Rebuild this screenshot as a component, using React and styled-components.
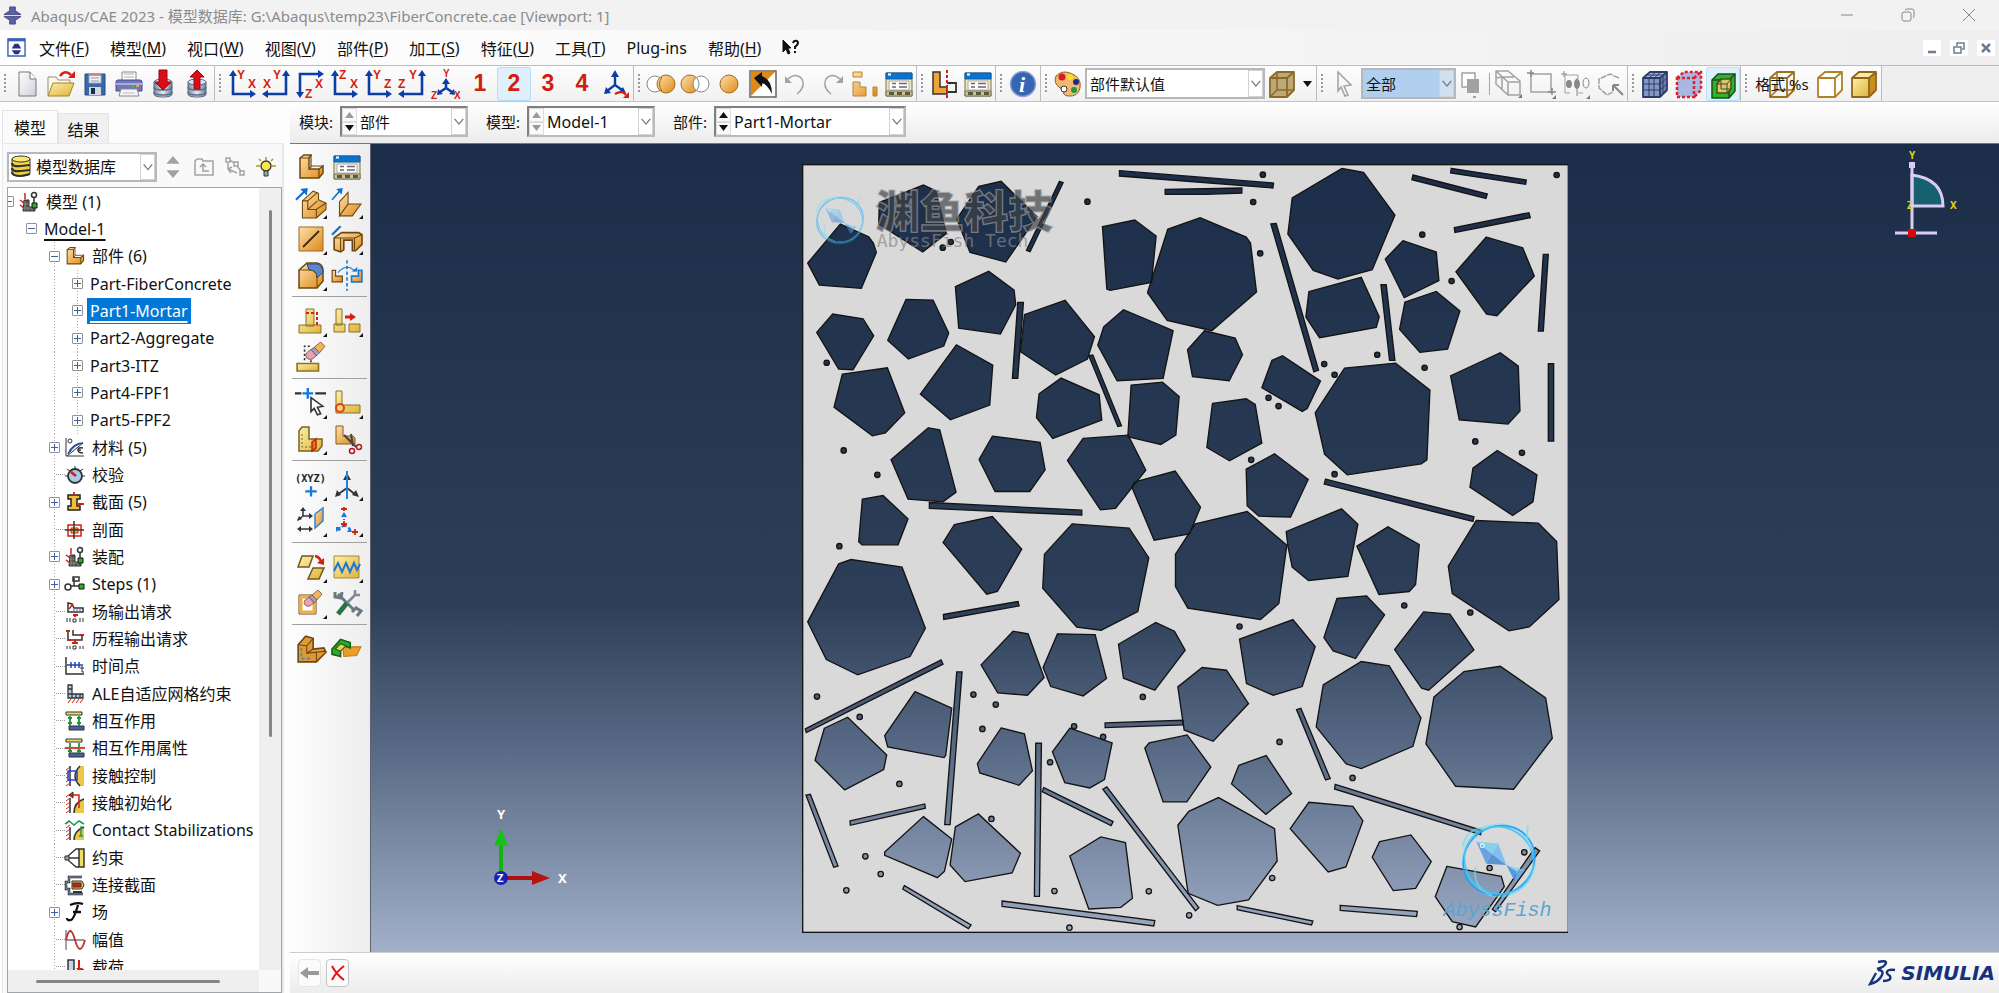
import React, { useState } from "react"
import styled, { createGlobalStyle, css } from "styled-components"

const GlobalStyle = createGlobalStyle`
  * {
    box-sizing: border-box;
  }

  body {
    margin: 0;
    font-family: "Noto Sans", "Noto Sans CJK SC", sans-serif;
    font-size: 16px;
    color: #111;
    background: #f0f0f0;
  }

  button,
  select {
    font: inherit;
    color: inherit;
    margin: 0;
    padding: 0;
    border: 0;
    background: none;
  }
`

const Window = styled.div`
  display: flex;
  flex-direction: column;
  height: 100vh;
  overflow: hidden;
`

const TitleBar = styled.header`
  display: flex;
  align-items: center;
  flex: 0 0 30px;
  padding: 0 0 0 3px;
  background: #f2f2f2;
  color: #8b8b8b;
  font-size: 15px;
  white-space: nowrap;

  h1 {
    flex: 1;
    margin: 0 0 0 9px;
    font-size: 15px;
    font-weight: 400;
  }
`

const WindowButton = styled.button`
  display: flex;
  align-items: center;
  justify-content: center;
  width: 61px;
  height: 30px;
`

const MenuBar = styled.nav`
  display: flex;
  align-items: center;
  gap: 21px;
  flex: 0 0 35px;
  padding: 0 4px 0 7px;
  white-space: nowrap;
  background: linear-gradient(90deg, #fff, #f6f6f6 55%, #eee);

  > svg {
    margin-right: -8px;
  }

  > button {
    display: flex;
    align-items: center;
  }

  u {
    text-underline-offset: 2px;
  }
`

const ChildButtons = styled.div`
  display: flex;
  gap: 9px;
  margin-left: auto;

  button {
    display: flex;
    align-items: center;
    justify-content: center;
    width: 18px;
    height: 16px;
    background: #fff;
  }
`

const Toolbar = styled.div`
  display: flex;
  flex: 0 0 37px;
  border-top: 1px solid #bcbcc0;
  border-bottom: 1px solid #c4c4c8;
  background: #efefef;
`

const ToolGroup = styled.div`
  display: flex;
  align-items: center;
  flex: none;
  border-right: 1px solid #bcbcc0;
  background: linear-gradient(#fdfdfd, #f1f1f1);

  &::before {
    content: "";
    width: 2px;
    height: 20px;
    margin: 0 4px;
    background: repeating-linear-gradient(#9a9a9a 0 2px, transparent 2px 4px);
  }
`

const ToolButton = styled.button`
  display: flex;
  align-items: center;
  justify-content: center;
  width: ${p => p.$width || 34}px;
  height: 34px;
  border-radius: 3px;

  ${p =>
    p.$active &&
    css`
      background: #dff0fd;
      box-shadow: inset 0 0 0 1px #b9defa;
    `}

  ${p =>
    p.$num &&
    css`
      color: #d01f10;
      font-family: "Liberation Sans", Arial, sans-serif;
      font-size: 23px;
      font-weight: 700;
    `}
`

const Rule = styled.span`
  width: 1px;
  height: 22px;
  margin: 0 1px;
  background: #a5a5a5;
`

const FormatButton = styled.button`
  display: grid;
  align-items: center;
  justify-items: center;
  width: 62px;
  height: 34px;
  font-size: 15px;
  white-space: nowrap;

  > * {
    grid-area: 1 / 1;
  }
`

const SelectBox = styled.span`
  display: flex;
  align-items: stretch;
  position: relative;
  width: ${p => p.$width}px;
  height: ${p => p.$height || 31}px;
  border: 2px solid #b5b8be;
  border-color: ${p => (p.$sunken ? "#808080 #bbb #bbb #808080" : "#b5b8be")};
  background: ${p => (p.$blue ? "#b0cfef" : "#fff")};

  select {
    flex: 1;
    min-width: 0;
    padding: 0 20px 0 3px;
    font-size: ${p => p.$font || 15}px;
    appearance: none;
    outline: 0;
  }

  > svg:last-child {
    position: absolute;
    right: 0;
    top: 0;
    width: 15px;
    height: 100%;
    border: 1px solid #d2d2d2;
    background: ${p => (p.$blue ? "#cfe0f3" : "#fff")};
    pointer-events: none;
  }
`

const Spin = styled.span`
  display: flex;
  flex-direction: column;
  width: 15px;

  button {
    display: flex;
    flex: 1;
    align-items: center;
    justify-content: center;
    border: 1px solid #ddd;
    background: #fafafa;
  }
`

const Body = styled.div`
  display: grid;
  grid-template-columns: 290px 1fr;
  flex: 1;
  min-height: 0;
`

const Side = styled.aside`
  display: flex;
  flex-direction: column;
  min-height: 0;
  padding: 8px 6px 0 2px;
  background: #fdfdfd;
`

const Tabs = styled.div`
  display: flex;
  align-items: flex-end;
  height: 33px;
`

const Tab = styled.button`
  width: ${p => (p.$active ? 56 : 51)}px;
  height: ${p => (p.$active ? 33 : 30)}px;
  border: 1px solid #e4e4e4;
  border-bottom: 0;
  background: ${p => (p.$active ? "#fbfbfb" : "#f0f0f0")};
`

const SidePanel = styled.div`
  display: flex;
  flex-direction: column;
  flex: 1;
  min-height: 0;
  padding: 8px 0 0 4px;
  border: 1px solid #e8e8e8;
  border-right: 2px solid #e8e8e8;
  border-bottom: 0;
  background: #f9f9f9;
`

const SideTools = styled.div`
  display: flex;
  align-items: center;
  margin-bottom: 5px;

  button {
    display: flex;
    justify-content: center;
    width: 31px;
  }
`

const TreeBox = styled.div`
  display: grid;
  grid-template-columns: 1fr 22px;
  grid-template-rows: 1fr 22px;
  flex: 1;
  min-height: 0;
  border: 1px solid #9fa3aa;
`

const Tree = styled.ul`
  min-height: 0;
  margin: 0;
  padding: 0 0 0 12px;
  overflow: hidden;
  list-style: none;
  background: #fff;
`

const dots = css`
  background: repeating-linear-gradient(#aaa 0 1px, transparent 1px 3px) center /
    1px 100% no-repeat;
`

const Cell = styled.span`
  display: flex;
  align-items: center;
  justify-content: center;
  flex: 0 0 23px;
  height: 100%;
  ${p => p.$line && dots}
`

const Tick = styled.span`
  width: 9px;
  margin-left: 11px;
  border-top: 1px dotted #999;
`

const Expander = styled.button`
  display: flex;
  align-items: center;
  justify-content: center;
  width: 11px;
  height: 11px;
  border: 1px solid #929292;
  border-radius: 1px;
  background: #fff;
`

const TreeRow = styled.li`
  display: flex;
  align-items: center;
  height: 27px;
  white-space: nowrap;

  &:nth-child(3n) {
    height: 28px;
  }

  > ${Cell}:first-child {
    margin-left: ${p => (p.$root ? -23 : 0)}px;
  }

  > svg {
    flex: none;
    margin-left: -1px;
    margin-right: 4px;
  }
`

const Label = styled.span`
  padding: 0 3px;
  line-height: 26px;
  background: ${p => (p.$selected ? "#0078d7" : "transparent")};
  color: ${p => (p.$selected ? "#fff" : "inherit")};
  margin-left: ${p => (p.$bare ? -2 : 0)}px;

  ${p =>
    p.$underline &&
    css`
      text-decoration: underline 2px;
      text-underline-offset: 4px;
      text-decoration-skip-ink: none;
    `}
`

const VScroll = styled.div`
  display: flex;
  justify-content: center;
  padding: 22px 0 233px;
  background: #efefef;

  &::before {
    content: "";
    width: 3px;
    border-radius: 2px;
    background: #858585;
  }
`

const HScroll = styled.div`
  display: flex;
  align-items: center;
  padding: 0 39px 0 28px;
  background: #efefef;

  &::before {
    content: "";
    flex: 1;
    height: 3px;
    border-radius: 2px;
    background: #858585;
  }
`

const Work = styled.main`
  display: flex;
  flex-direction: column;
  min-width: 0;
  min-height: 0;
`

const ModuleBar = styled.div`
  display: flex;
  align-items: center;
  flex: 0 0 42px;
  padding: 0 0 2px 9px;
  background: linear-gradient(#fff, #ececec);
  border-bottom: 1px solid #777;
  font-size: 15px;

  label {
    display: flex;
    align-items: center;
    gap: 7px;
    margin-right: 18px;
  }
`

const Stage = styled.div`
  display: flex;
  flex: 1;
  min-height: 0;
`

const Toolbox = styled.div`
  flex: 0 0 80px;
  padding: 0 3px 0 2px;
  background: linear-gradient(90deg, #fdfdfd, #ededed);
`

const ToolSet = styled.div`
  display: grid;
  grid-template-columns: 36px 36px;
  grid-auto-rows: 36px;
  padding: 6px 0 3px 1px;
  border-bottom: 1px solid #a0a0a0;

  &:first-child {
    padding: 5px 0 3px 1px;
  }

  &:last-child {
    border: 0;
  }
`

const ToolSetButton = styled.button`
  position: relative;
  display: flex;
  align-items: center;
  justify-content: center;

  &::after {
    content: "";
    position: absolute;
    right: 2px;
    bottom: 2px;
    border: 2px solid #111;
    border-top-color: transparent;
    border-left-color: transparent;
    display: ${p => (p.$more ? "block" : "none")};
  }
`

const Viewport = styled.section`
  position: relative;
  display: flex;
  align-items: center;
  justify-content: center;
  flex: 1;
  min-width: 0;
  border-left: 1px solid #5d6470;
  background: linear-gradient(#1b2d48, #2d3e58 57%, #586a85 75%, #a2b0ca);
`

const Plate = styled.svg`
  height: calc(100% - 39px);
  max-width: 100%;
`

const Triad = styled.svg`
  position: absolute;
  left: 115px;
  bottom: 58px;
`

const ViewCompass = styled.svg`
  position: absolute;
  top: 4px;
  right: 38px;
  overflow: visible;
`

const Prompt = styled.footer`
  display: flex;
  align-items: center;
  flex: 0 0 41px;
  gap: 5px;
  padding: 0 4px 0 8px;
  border-top: 1px solid #ccc;
  background: linear-gradient(#fff, #ececec);
`

const PromptButton = styled.button`
  display: flex;
  align-items: center;
  justify-content: center;
  width: 23px;
  height: 28px;
  border: 1px solid ${p => (p.disabled ? "#e6e6e6" : "#c4c4c4")};
  border-radius: 4px;
  background: #fbfbfb;
`

const Brand = styled.div`
  display: flex;
  align-items: center;
  gap: 5px;
  margin-left: auto;
  color: #16317d;
  font: italic 700 20px "DejaVu Sans", sans-serif;
`

/* ---------- icons ---------- */

const Glyph = ({ size = 28, box = 28, children, ...rest }) => (
  <svg
    width={size}
    height={size}
    viewBox={`0 0 ${box} ${box}`}
    overflow="visible"
    fill="none"
    stroke="#333"
    strokeWidth="1"
    aria-hidden="true"
    {...rest}
  >
    {children}
  </svg>
)

const RED = "#d4210f"
const BLUE = "#0b3fa5"
const GRAY = "#a2a2a2"
const OR = "url(#orange)"
const YE = "url(#yellow)"
const DK = "#6c4712"

const Defs = () => (
  <svg width="0" height="0" style={{ position: "absolute" }} aria-hidden="true">
    <defs>
      <linearGradient id="orange" x2="1" y2="1">
        <stop offset="0" stopColor="#fde0ac" />
        <stop offset="1" stopColor="#df8a17" />
      </linearGradient>
      <linearGradient id="yellow" x2="1" y2="1">
        <stop offset="0" stopColor="#fdf0a8" />
        <stop offset="1" stopColor="#dfb33c" />
      </linearGradient>
      <linearGradient id="paper" x2="1" y2="1">
        <stop offset="0" stopColor="#fff" />
        <stop offset="1" stopColor="#cfcfdc" />
      </linearGradient>
      <linearGradient id="steel">
        <stop offset="0" stopColor="#7488a4" />
        <stop offset=".5" stopColor="#e4ebf3" />
        <stop offset="1" stopColor="#667b98" />
      </linearGradient>
    </defs>
  </svg>
)

const Axes = ({ d, heads, labels, size = 12 }) => (
  <Glyph>
    <path d={d} stroke={BLUE} strokeWidth="2.6" />
    <path d={heads} fill={BLUE} stroke="none" />
    <g
      fill={RED}
      stroke="none"
      fontFamily="Liberation Sans, sans-serif"
      fontWeight="700"
      fontSize={size}
    >
      {labels.map(([text, x, y]) => (
        <text key={text} x={x} y={y}>{text}</text>
      ))}
    </g>
  </Glyph>
)

const rightL = { d: "M5 4V24H24", heads: "M5 0l4 6H1zM28 24l-6-4v8z" }
const leftL = { d: "M24 4V24H5", heads: "M24 0l4 6h-8zM0 24l6-4v8z" }
const downL = { d: "M24 4H4V24", heads: "M28 4l-6-4v8zM4 28l-4-6h8z" }

const TableIcon = () => (
  <Glyph>
    <path d="M1 3h26v23H1z" fill="#efe6bd" stroke="#77735a" />
    <path d="M1 3h26v6H1z" fill="#0a74cf" stroke="#0a5da6" />
    <path d="M3 4.500h3" stroke="#fff" strokeWidth="2" />
    <path d="M4 11h20v9H4z" fill="#fff" stroke="#aaa" />
    <path d="M7 13.500h4M7 17h4M14 13.500h8M14 17h8" stroke="#667" strokeWidth="1.500" />
    <path d="M1 21h26v5H1z" fill="#c9c296" stroke="#77735a" />
    <path d="M4 22h5v3H4zM12 22h5v3h-5zM20 22h5v3h-5z" fill="#5c5a3e" stroke="none" />
  </Glyph>
)

const PartIcon = ({ size = 28 }) => (
  <Glyph size={size}>
    <path d="M3 5l4-3h7l-2 3v11h10l4-3v7l-4 5H3z" fill={OR} stroke={DK} strokeWidth="1.500" />
    <path d="M3 5h9M12 16l2-2V2M14 13h12M22 16v9" stroke={DK} strokeWidth="1.200" />
  </Glyph>
)

const Cube = ({ fill, top, side, stroke, mesh, back }) => (
  <Glyph>
    <path d="M2 8h17v19H2z" fill={fill} stroke="none" />
    <path d="M2 8l7-6h17l-7 6z" fill={top || fill} stroke="none" />
    <path d="M19 8l7-6v18l-7 7z" fill={side || fill} stroke="none" />
    {back && <path d="M9 2v18h17M9 20l-7 7" stroke={stroke} strokeWidth="1.500" />}
    {mesh && (
      <path
        d="M8 8v19M13 8v19M2 14h17M2 20h17M8 8l7-6M13 8l7-6M19 14l7-6M19 20l7-6M22 5v19M5 5h17"
        stroke={stroke}
      />
    )}
    <path d="M2 8h17v19H2zL9 2h17v18l-7 7M19 8l7-6" stroke={stroke} strokeWidth="1.800" strokeLinejoin="round" />
  </Glyph>
)

const Eraser = ({ x = 0, y = 0 }) => (
  <g transform={`translate(${x} ${y})`} stroke="#7a5440" strokeWidth=".8">
    <path d="M9 5l6-5 4 4-5 6z" fill="#f5b25c" />
    <path d="M6 7l3-2 5 5-3 3z" fill="#9aa4bf" />
    <path d="M2 10l4-3 5 6-4 3q-3 1-5-1t0-5z" fill="#e8a2ae" />
  </g>
)

const Database = ({ up }) => (
  <Glyph>
    <path d="M5 12v12q0 3 9 3t9-3V12" fill="url(#steel)" stroke="#5b6b82" />
    <ellipse cx="14" cy="12" rx="9" ry="3" fill="#dbe3ee" stroke="#5b6b82" />
    <path d="M5 17q0 3 9 3t9-3M5 22q0 3 9 3t9-3" stroke="#5b6b82" strokeWidth="1.500" />
    <path
      d={up ? "M14 0l7 7h-4v12h-6V7H7z" : "M10 0h8v12h4l-8 8-8-8h4z"}
      fill="#d90d18"
      stroke="#9c0710"
    />
  </Glyph>
)

const Chevron = () => (
  <svg viewBox="0 0 15 28" fill="none" stroke="#777" strokeWidth="1.500">
    <path d="M3 11l5 6 5-6" />
  </svg>
)

const Arrow = ({ down, off }) => (
  <svg width="9" height="6" viewBox="0 0 9 6" fill={off ? "#9a9a9a" : "#111"}>
    <path d={down ? "M0 0h9L4.500 6z" : "M0 6h9L4.500 0z"} />
  </svg>
)

const fileTools = [
  ["新建", <Glyph><path d="M6 2h11l6 7v17H6z" fill="url(#paper)" stroke="#777" /><path d="M17 2v7h6" fill="#fff" stroke="#777" /></Glyph>],
  ["打开", <Glyph><path d="M1 25V7h8l2 3h12v4" fill="#fffbe8" stroke="#8e8e7c" /><path d="M1 26l5-13h21l-5 13z" fill={YE} stroke="#a38129" /><path d="M13 6q5-7 11-1" stroke={RED} strokeWidth="2.500" /><path d="M21 8h7V1z" fill={RED} stroke="none" /></Glyph>],
  ["保存", <Glyph><path d="M4 4h20v21H4z" fill="#3b69a5" stroke="#254a7c" /><path d="M8 4h12v9H8z" fill="#eef3f9" stroke="#9ab" /><path d="M8 5h12" stroke="#c33" strokeWidth="1" /><path d="M10 8h8M10 11h8" stroke="#99a" /><path d="M8 17h12v8H8z" fill="#cfd8e4" stroke="none" /><path d="M10 18h4v6h-4z" fill="#1b2c48" stroke="none" /></Glyph>],
  ["打印", <Glyph><path d="M7 2h14v9H7z" fill="#fff" stroke="#888" /><path d="M9 4h10M9 7h10" stroke="#aab" /><path d="M3 10h22q2 0 2 2v9H1v-9q0-2 2-2z" fill="#7077bd" stroke="#464c8c" /><path d="M1 14h26" stroke="#a7acdf" strokeWidth="2" /><path d="M6 19h16l2 7H4z" fill="#f7f7fb" stroke="#888" /><path d="M8 23h12" stroke="#bbb" /><path d="M17 16h2" stroke="#3c3" strokeWidth="2" /><path d="M21 16h3" stroke="#f93" strokeWidth="2" /></Glyph>],
  ["保存数据库", <Database />],
  ["读取数据库", <Database up />],
]

const viewTools = [
  ["XY", <Axes {...rightL} labels={[["Y", 9, 9], ["X", 20, 18]]} />],
  ["-XY", <Axes {...leftL} labels={[["Y", 11, 9], ["X", 1, 18]]} />],
  ["XZ", <Axes {...downL} labels={[["X", 19, 18], ["Z", 9, 28]]} />],
  ["ZX", <Axes {...rightL} labels={[["Z", 9, 9], ["X", 20, 18]]} />],
  ["YZ", <Axes {...rightL} labels={[["Y", 9, 9], ["Z", 20, 18]]} />],
  ["ZY", <Axes {...leftL} labels={[["Y", 11, 9], ["Z", 0, 18]]} />],
  [
    "等轴",
    <Axes
      d="M14 11v8M14 18l-6 4M14 18l6 4"
      heads="M14 8l4 6h-8zM5 25l1-6 5 5zM23 25l-6-1 5-5z"
      size={10}
      labels={[["Y", 11, 7], ["Z", -1, 29], ["X", 22, 29]]}
    />,
  ],
]

const TriadRotate = () => (
  <Glyph>
    <path d="M13 4v11l-8 6M13 15l7 5" stroke={BLUE} strokeWidth="2.400" />
    <path d="M13 0l4 7H9zM2 24l2-7 5 6zM24 23l-7-1 4-5z" fill={BLUE} stroke="none" />
    <path d="M13 24q7-4 11 1" stroke={RED} strokeWidth="2.200" />
    <path d="M21 28h6v-6z" fill={RED} stroke="none" />
  </Glyph>
)

const displayTools = [
  ["交集", <Glyph><circle cx="8" cy="14" r="8" fill="#fff" stroke="#888" /><circle cx="19" cy="14" r="9" fill={OR} stroke="#a06a1c" /><path d="M15 7q-5 7 0 14" stroke="#a06a1c" /></Glyph>],
  ["差集", <Glyph><circle cx="9" cy="14" r="9" fill={OR} stroke="#a06a1c" /><circle cx="20" cy="14" r="8" fill="#fff" stroke="#888" /><path d="M16 8q4 6 0 12" stroke="#888" /></Glyph>],
  ["合集", <Glyph><circle cx="14" cy="14" r="9" fill={OR} stroke="#a06a1c" /></Glyph>],
  ["替换", <Glyph><path d="M1 1h26v26H1z" fill="#fff" stroke="#6a6457" strokeWidth="1.500" /><path d="M2 2h24L2 26z" fill="#df8a17" stroke="none" /><path d="M5 8l8-6v4q10 4 10 18-5-10-10-11v4z" fill="#111" stroke="none" /></Glyph>],
  ["撤销", <Glyph><path d="M5 9q8-7 14 0 4 8-5 15" stroke={GRAY} strokeWidth="1.500" /><path d="M2 6v7h7z" fill={GRAY} stroke="none" /></Glyph>],
  ["重做", <Glyph><path d="M23 9q-8-7-14 0-4 8 5 15" stroke={GRAY} strokeWidth="1.500" /><path d="M26 6v7h-7z" fill={GRAY} stroke="none" /></Glyph>],
  ["显示组", <Glyph><path d="M2 2h9v5H2zM2 12h7v5h6v9H2zM22 17h4v9h-4z" fill={OR} stroke="#b58437" /></Glyph>],
  ["管理器", <TableIcon />],
]

const selectTools = [
  ["立体选择", <Glyph><path d="M2 1h12l12 10v14H14L2 14zM2 1l12 11h12M14 12v13M8 7v12M2 8l6-1h12" stroke={GRAY} strokeWidth="1.500" /><path d="M28 24v4h-4z" fill="#777" stroke="none" /></Glyph>],
  ["框选", <Glyph><path d="M3 4h20v18H3z" stroke={GRAY} strokeWidth="1.500" /><path d="M3 0v7M-1 3h7M24 18v7M20 22h8" stroke="#888" strokeWidth="1.500" /><path d="M28 25v4h-4z" fill="#777" stroke="none" /></Glyph>],
  ["实体选择", <Glyph><path d="M3 5h13v4M3 5v18h5M21 23h-5" stroke={GRAY} /><path d="M2 1v6M-1 4h6" stroke="#888" /><ellipse cx="7" cy="14" rx="3" ry="4" fill="#888" stroke="none" /><ellipse cx="15" cy="14" rx="3" ry="5" fill="#888" stroke="none" /><ellipse cx="24" cy="13" rx="3" ry="5" stroke="#888" /><path d="M15 8v18" stroke="#888" /><path d="M28 25v4h-4z" fill="#777" stroke="none" /></Glyph>],
  ["套索", <Glyph><path d="M23 8l-9-4-11 5v9l8 7 6-3" stroke={GRAY} strokeWidth="1.500" strokeDasharray="6 1" /><path d="M17 15l10 10M17 15v6M17 15h6" stroke="#888" strokeWidth="2" /></Glyph>],
]

const more = true
const toolSets = [
  [
    ["创建部件", <PartIcon />],
    ["部件管理器", <TableIcon />],
    ["拉伸实体", <Glyph size={30}><path d="M6 12l10-9 5 2v6l7 3v6l-9 8H6z" fill={OR} stroke={DK} /><path d="M6 12h5v8h8v8M11 12l9-8M11 20l9-8M19 20l9-6" stroke={DK} /><path d="M0 11l8-8" stroke="#0b6fd0" strokeWidth="2" /><path d="M11 0l-1 7-6-6z" fill="#0b6fd0" stroke="none" /></Glyph>, more],
    ["拉伸壳", <Glyph size={30}><path d="M7 13l8-9v11l-8 11zM7 26l8-11h12l-8 11z" fill={OR} stroke={DK} /><path d="M0 11l7-8" stroke="#0b6fd0" strokeWidth="1.500" /><path d="M10 0l-1 6-5-5z" fill="#0b6fd0" stroke="none" /></Glyph>, more],
    ["创建壳", <Glyph><path d="M2 2h24v24H2z" fill={OR} stroke="#9b6a1e" /><path d="M6 22L22 6" stroke="#3b2a10" strokeWidth="1.800" /></Glyph>, more],
    ["切割", <Glyph size={30}><path d="M2 13l7-5h16l3 2v9l-6 6h-3V15h-8v9l-3 2-6-2z" fill={OR} stroke={DK} strokeWidth="1.500" /><path d="M2 13h19v11M8 13v12M21 13l7-3" stroke={DK} /><path d="M0 10l8-8" stroke="#0b6fd0" strokeWidth="2" /></Glyph>, more],
    ["倒圆角", <Glyph><path d="M2 9l8-7h10q6 1 6 8v10l-6 7H2z" fill={OR} stroke={DK} strokeWidth="1.500" /><path d="M10 3h10q5 1 6 8l-6 6q0-8-8-8z" fill="#5c86cc" stroke="#284a86" /><path d="M2 9h10q8 0 8 8v10" stroke={DK} /></Glyph>, more],
    ["镜像", <Glyph size={32}><path d="M1 10h3v5h6v5H1z" fill={OR} stroke={DK} /><path d="M27 10h-3v5h-6v5h9z" fill={OR} stroke="#1b7ad4" strokeWidth="1.500" /><path d="M14 1v27" stroke="#1b86dd" strokeDasharray="3 2" strokeWidth="1.500" /><path d="M6 12q8-9 15-1" stroke="#1b7ad4" /><path d="M18 11h5V7z" fill="#1b7ad4" stroke="none" /></Glyph>],
  ],
  [
    ["编辑特征", <Glyph><path d="M9 2h8v17H9zM2 18h22v8H2z" fill={YE} stroke="#8a7128" /><path d="M9 6h11v12" stroke={RED} strokeWidth="2" strokeDasharray="3 2" /></Glyph>, more],
    ["抑制特征", <Glyph><path d="M3 2h6v16H3zM1 17h11v8H1zM16 17h11v8H16z" fill={YE} stroke="#8a7128" /><path d="M12 10h6" stroke={RED} strokeWidth="3" /><path d="M17 6l6 4-6 4z" fill={RED} stroke="none" /></Glyph>, more],
    ["删除特征", <Glyph size={30}><path d="M1 20h20v7H1z" fill={YE} stroke="#8a7128" strokeWidth="1.500" /><path d="M8 17V4h5M14 19v-4" stroke="#333" strokeDasharray="2 2" strokeWidth="1.500" /><Eraser x={8} y={0} /></Glyph>],
  ],
  [
    ["分割边", <Glyph size={30}><path d="M-1 5h6M18 5h10" stroke="#333" strokeWidth="2" /><path d="M6 5h10M11 0v10" stroke="#0b7be0" strokeWidth="2.200" /><path d="M14 9l11 8-5 1 3 6-3 1-3-6-3 3z" fill="#fff" strokeWidth="1.500" /></Glyph>, more],
    ["分割面", <Glyph><path d="M3 2h6v14h18v8H3z" fill={YE} stroke="#8a7128" /><circle cx="7" cy="19" r="4" stroke="#e2401b" strokeWidth="2" /></Glyph>, more],
    ["分割实体", <Glyph><path d="M2 6l3-4h7v12h13v7l-4 5H2z" fill={YE} stroke="#7a6424" strokeWidth="1.500" /><path d="M5 9v13h10" stroke="#7a6424" strokeDasharray="2 2" /><path d="M15 17l4-3v9l-4 3z" fill="#e8702a" stroke="#c2220d" strokeWidth="1.500" /></Glyph>, more],
    ["修剪", <Glyph><path d="M3 1h7v10h10l2 2v6H3z" fill={OR} stroke="#8a5a18" /><path d="M11 10l12 12M18 9l2 12" stroke="#444" strokeWidth="2" /><circle cx="19" cy="26" r="2.500" stroke="#b31722" strokeWidth="1.500" /><circle cx="26" cy="22" r="2.500" stroke="#b31722" strokeWidth="1.500" /></Glyph>],
  ],
  [
    ["基准点", <Glyph size={32}><text x="0" y="11" fill="#222" stroke="none" fontFamily="DejaVu Sans Mono, monospace" fontWeight="700" fontSize="9">(XYZ)</text><path d="M14 15v9M9 19.500h10" stroke="#1b76dd" strokeWidth="2" /></Glyph>, more],
    ["基准轴", <Glyph><path d="M14 5v12L4 24M14 17l9 7" stroke="#333" strokeWidth="1.800" /><path d="M14 2l4 7h-8zM2 26l2-7 4 5zM26 26l-7-2 4-5z" fill="#333" stroke="none" /><path d="M14 0v28" stroke="#1b86e0" strokeWidth="2" /></Glyph>, more],
    ["基准面", <Glyph><path d="M6 3v6h8M6 9l-5 4M2 22h12" stroke="#333" strokeWidth="1.500" /><path d="M6 0l3 4H3zM16 9l-4-3v6zM0 14l2-5 3 3zM0 22l4-3v6zM16 22l-4-3v6z" fill="#333" stroke="none" /><path d="M18 7l8-6v13l-8 7z" fill={OR} stroke="#2d87cf" strokeWidth="1.500" /></Glyph>, more],
    ["基准坐标系", <Glyph><path d="M11 7v6M11 18l-6 6M11 18l6 4" stroke="#1b76dd" strokeWidth="2" strokeDasharray="3 2" /><path d="M11 5l3 5H8zM3 25v-5h5zM19 25h-5l3-5z" fill="#1b76dd" stroke="none" /><path d="M11 0v4M8 2h6M11 14v6M8 17h6M22 22v6M19 25h6" stroke={RED} strokeWidth="1.800" /></Glyph>, more],
  ],
  [
    ["投影", <Glyph><path d="M5 3h11l-4 11H1zM16 15h11l-5 11H11z" fill={YE} stroke="#70581b" strokeWidth="1.500" /><path d="M18 3q5 1 6 6" stroke={RED} strokeWidth="2.500" /><path d="M20 10l7 2V5z" fill={RED} stroke="none" /></Glyph>, more],
    ["缝合", <Glyph><path d="M1 3h25v22H1z" fill={YE} stroke="#a58a32" /><path d="M1 18l4-8 4 9 4-9 4 9 4-9 3 7 3-6" stroke="#1b76dd" strokeWidth="2" /></Glyph>, more],
    ["修复", <Glyph><path d="M2 6h17v19H2z" fill="#fff" stroke={DK} /><path d="M4 8h13v15H4z" stroke="#eab04a" strokeWidth="3" /><Eraser x={6} y={1} /></Glyph>, more],
    ["工具", <Glyph><path d="M5 5l17 17M2 3v5l6 1 1-6M24 27l4-5-5-3-4 4" stroke="#6c7780" strokeWidth="3" /><path d="M22 6l-9 9M22 1v5h5" stroke="#7e8993" strokeWidth="2.500" /><path d="M14 14L5 25" stroke="#257548" strokeWidth="5" /></Glyph>],
  ],
  [
    ["质量", <Glyph size={30}><path d="M2 10l7-8 7 2v10l10-1 2 4-9 9H2z" fill="#e19a33" stroke={DK} strokeWidth="1.500" /><path d="M2 10l8 1v7l9-1v9M10 11l6-7M10 18l6-4M19 17l9-1" stroke={DK} /><path d="M5 13v10h10" stroke="#3c86c8" strokeDasharray="3 2" strokeWidth="1.500" /></Glyph>],
    ["中面", <Glyph size={30}><path d="M10 12h17l-4 8-12 1z" fill="#ed9c27" stroke="#c17a16" /><path d="M0 14l8-9 9 3v5l-6-2-3 3v7l-8-2z" fill="#32a72e" stroke="#156214" strokeWidth="1.500" /><path d="M3 14l5-5 5 2-5 5z" fill="#e8d24a" stroke="#156214" /></Glyph>],
  ],
]

const TreeGlyph = props => <Glyph size={20} box={20} {...props} />
const Hatch = () => <path d="M1 4l4-3M1 8l4-3M1 12l4-3M1 16l4-3M1 20l4-3" stroke={RED} />

const treeIcons = {
  model: <TreeGlyph><path d="M6 1v6M1 8l4 3M1 13l4 3" stroke={RED} strokeWidth="1.500" /><path d="M5 8h5v7h6v4H4z" fill="#555" /><path d="M6 9v10M4 12h6M4 16h12M9 15v4M13 15v4" stroke="#999" strokeWidth=".7" /><circle cx="15" cy="3" r="2.500" strokeWidth="1.500" /><path d="M15 6v5" strokeWidth="1.500" /><path d="M13 11h5v5h-5z" fill="#2fae2d" stroke="#111" /></TreeGlyph>,
  part: <PartIcon size={20} />,
  material: <TreeGlyph><path d="M1 0v18h18M2 18L18 5q-8 1-13 9" stroke="#333" /><path d="M3 16q5-11 15-11" stroke="#2544b4" strokeWidth="1.500" /><circle cx="5" cy="3" r="2" /><path d="M18 10q-5-1-5 2h3-3q0 3 5 3" strokeWidth="1.500" /></TreeGlyph>,
  check: <TreeGlyph><circle cx="10" cy="11" r="7" fill="#a9c8ee" strokeWidth="1.800" /><path d="M10 1v3M2 4l3 2M18 4l-3 2M0 11h3M17 11h3" /><path d="M6 7l5 4" stroke={RED} strokeWidth="2.800" /></TreeGlyph>,
  section: <TreeGlyph><path d="M3 3h12v4h-3v7h3v4H3v-4h3V7H3z" fill="#ecc037" stroke="#222" strokeWidth="1.500" /><path d="M9 0v4M13 12h6" stroke={RED} strokeWidth="1.800" /></TreeGlyph>,
  profile: <TreeGlyph><path d="M3 5h13v11H3z" stroke={RED} strokeWidth="1.500" /><path d="M6 8h7v5H6z" fill="#efb33c" stroke={RED} /><path d="M9 1v18M0 10h19" strokeWidth="1.500" /></TreeGlyph>,
  steps: <TreeGlyph><circle cx="3" cy="13" r="3" strokeWidth="1.500" /><path d="M6 12h8M9 12V4M8 3h6v4H8z" strokeWidth="1.500" /><path d="M14 10h5v5h-5z" fill="#2fae2d" stroke="#111" /></TreeGlyph>,
  field: <TreeGlyph><path d="M3 1v9h15V6H9L7 2z" strokeWidth="1.500" /><path d="M4 7l4-5" stroke={RED} strokeWidth="1.500" /><path d="M8 8h8" stroke="#2a63c9" strokeDasharray="2 1" /><path d="M10 12v3M8 13h5" stroke={RED} strokeWidth="2" /><path d="M2 16v4M5 16v4M15 16v4M18 16v4" /><path d="M8 17h3v3H8z" /></TreeGlyph>,
  history: <TreeGlyph><path d="M3 2v9h14V6H8V1" strokeWidth="1.500" /><path d="M1 2h4M2 11h4M10 10v5M15 6h4M7 14h6" stroke={RED} strokeWidth="2.200" /><path d="M2 17v3M5 17v3M15 17v3M18 17v3M8 17h3v3H8z" /></TreeGlyph>,
  time: <TreeGlyph><path d="M1 1v17h18" strokeWidth="1.500" /><path d="M2 9h16M6 6v6M10 6v6M14 6v6" stroke="#2544b4" strokeWidth="1.500" /><path d="M17 10v6h2M15 12h4" /></TreeGlyph>,
  ale: <TreeGlyph><path d="M3 1h4v9h11v4H3zM3 5h4M3 10h4M7 10v4M11 10v4M15 10v4" fill="#b9cbe6" strokeWidth="1.300" /><path d="M3 19l3-4M7 19l3-4M11 19l3-4M15 19l3-4" stroke={RED} /></TreeGlyph>,
  interaction: <TreeGlyph><path d="M1 1h16v3H1z" fill="#efdb61" /><path d="M4 15h15v4H4z" fill="#4c5fa5" /><path d="M5 5v10M14 5v10M3 12h4M12 12h4M3 7h4M12 7h4" stroke="#17973b" strokeWidth="1.800" /></TreeGlyph>,
  property: <TreeGlyph><path d="M1 1h16v3H1z" fill="#efdb61" /><path d="M4 15h15v4H4z" fill="#4c5fa5" /><path d="M5 5v10M14 5v10M3 13h4M12 13h4" stroke="#17973b" strokeWidth="1.800" /><path d="M0 10h20" stroke="#d6443a" strokeWidth="2.200" /></TreeGlyph>,
  control: <TreeGlyph><path d="M14 0h5v20h-5q-8-10 0-20z" fill="#ecc646" stroke="none" /><path d="M15 0q-10 10 0 20M5 0v20" strokeWidth="1.500" /><Hatch /><path d="M3 5h9v9H3z" stroke="#2544d4" strokeWidth="1.500" /></TreeGlyph>,
  init: <TreeGlyph><path d="M19 6v14H9q0-10 10-14z" fill="#ecc646" stroke="none" /><path d="M9 20q0-11 10-14M5 5v15" strokeWidth="1.500" /><Hatch /><path d="M6 2h8v13" stroke={RED} strokeWidth="1.500" /><path d="M4 2l4-3v6z" fill={RED} /></TreeGlyph>,
  stable: <TreeGlyph><path d="M19 7v13H9q0-9 10-13z" fill="#ecc646" stroke="none" /><path d="M9 20q0-9 10-13M5 7v13" strokeWidth="1.500" /><Hatch /><path d="M0 4l4-3 5 4 5-4 5 3M16 6v10M14 16h4" stroke="#1a9a55" strokeWidth="1.500" /></TreeGlyph>,
  constraint: <TreeGlyph><path d="M14 1h5v18h-5z" fill="#f0dd5e" strokeWidth="1.500" /><path d="M14 1h-3L3 8v4l8 7h3M4 10h10" strokeWidth="1.300" /><path d="M0 8h4v4H0z" fill="#8ea4c6" /></TreeGlyph>,
  connector: <TreeGlyph><path d="M17 2H4v5H1v7h3v5h14" stroke="#222" strokeWidth="2.500" /><path d="M17 2H4v5H1v7h3v5h14" stroke="#8aa0c5" /><path d="M7 6h10l2 4-2 4H7z" fill="#ecc646" /><path d="M8 8h8v4H8z" fill={RED} /><path d="M8 17h9" strokeWidth="2" /></TreeGlyph>,
  fields: <TreeGlyph><path d="M5 3q7-3 13-1M13 3Q9 17 6 18q-4 1-4-2M8 10h8" stroke="#111" strokeWidth="2.300" /></TreeGlyph>,
  amplitude: <TreeGlyph><path d="M1 0v20M1 10h18" stroke="#777" strokeWidth="1.300" /><path d="M1 10Q5-8 10 10t10 0" stroke="#c22b2b" strokeWidth="1.800" /></TreeGlyph>,
  load: <TreeGlyph><path d="M3 3h6v17H3z" fill="#c6d4ea" strokeWidth="1.500" /><path d="M14 3v10M18 12v8" stroke={RED} strokeWidth="2" /><path d="M11 11h7l-3 5z" fill={RED} stroke="none" /></TreeGlyph>,
}

/* level, label, expander sign, icon */
const treeRows = [
  [0, "模型 (1)", "-", "model"],
  [1, "Model-1", "-"],
  [2, "部件 (6)", "-", "part"],
  [3, "Part-FiberConcrete", "+"],
  [3, "Part1-Mortar", "+"],
  [3, "Part2-Aggregate", "+"],
  [3, "Part3-ITZ", "+"],
  [3, "Part4-FPF1", "+"],
  [3, "Part5-FPF2", "+"],
  [2, "材料 (5)", "+", "material"],
  [2, "校验", "", "check"],
  [2, "截面 (5)", "+", "section"],
  [2, "剖面", "", "profile"],
  [2, "装配", "+", "model"],
  [2, "Steps (1)", "+", "steps"],
  [2, "场输出请求", "", "field"],
  [2, "历程输出请求", "", "history"],
  [2, "时间点", "", "time"],
  [2, "ALE自适应网格约束", "", "ale"],
  [2, "相互作用", "", "interaction"],
  [2, "相互作用属性", "", "property"],
  [2, "接触控制", "", "control"],
  [2, "接触初始化", "", "init"],
  [2, "Contact Stabilizations", "", "stable"],
  [2, "约束", "", "constraint"],
  [2, "连接截面", "", "connector"],
  [2, "场", "+", "fields"],
  [2, "幅值", "", "amplitude"],
  [2, "载荷", "", "load"],
]

const menus = [
  ["文件", "F"],
  ["模型", "M"],
  ["视口", "W"],
  ["视图", "V"],
  ["部件", "P"],
  ["加工", "S"],
  ["特征", "U"],
  ["工具", "T"],
  ["Plug-ins"],
  ["帮助", "H"],
]

/* ---------- concrete section: aggregates, fibres and fibre ends ---------- */

const tiles = [
  {
    x: 0,
    y: 0,
    shapes: [
      "123,205 208,243 222,262 231,290 186,398 60,388 25,322",
      "240,140 372,88 409,105 441,233 370,289 238,205",
      "538,92 605,77 713,183 619,319 512,290 472,190",
      "780,77 791,81 692,288 681,284",
      "909,213 1006,193 1070,241 1056,380 932,404 922,400",
      "1105,220 1202,186 1340,244 1353,262 1371,409 1237,525 1103,494 1044,411",
      "960,45 1422,82 1420,97 960,61",
      "1097,101 1327,97 1327,112 1220,116 1097,116",
      "468,393 568,347 644,403 649,447 603,535 478,517",
      "655,440 672,440 655,668 639,668",
      "675,477 797,434 885,543 864,610 769,658 663,588",
      "320,431 401,433 448,532 433,571 327,610 265,554",
      "52,530 100,475 191,489 223,540 161,642 118,640",
      "129,655 264,636 316,771 258,831 219,840 104,754",
      "471,567 580,628 571,748 453,792 363,715",
      "913,513 972,462 1121,525 1091,668 953,675 895,568",
      "868,600 880,598 966,810 955,812",
      "719,714 785,667 899,717 907,793 760,848 711,785",
      "995,688 1089,679 1139,722 1129,838 1084,866 985,843",
      "387,816 421,822 470,1009 431,1038 326,1030 275,912",
      "579,841 722,860 737,942 691,1007 587,1007 539,911",
      "851,848 986,838 1039,943 948,1058 903,1062 804,914",
      "1006,978 1127,946 1203,1054 1170,1134 1064,1153 997,994",
      "390,1040 847,1063 847,1078 390,1058",
      "189,1030 251,1019 326,1089 296,1167 188,1167 178,1158",
      "431,1160 465,1106 579,1082 667,1180 594,1307 562,1315",
      "818,1104 989,1117 1048,1206 1015,1367 905,1423 832,1414 730,1297 735,1195",
      "1187,1104 1343,1067 1462,1168 1438,1343 1383,1391 1165,1357 1128,1292 1128,1195",
    ],
    dots: "430,276 454,259 864,138 82,621 133,884 234,957 120,1171",
  },
  {
    x: 1140,
    y: 0,
    shapes: [
      "75,525 167,547 189,597 149,675 39,663 24,582",
      "487,38 552,50 646,178 578,342 475,370 401,344 325,235 338,127",
      "388,408 545,365 599,483 590,515 420,546 379,484",
      "670,255 770,289 778,375 674,426 617,310",
      "920,244 1029,276 1064,361 952,480 921,475 829,348",
      "676,439 770,407 841,466 804,580 721,590 660,521",
      "277,614 309,600 423,676 383,758 368,767 247,696",
      "495,637 648,622 751,703 742,912 725,924 503,957 435,895 407,771",
      "813,660 962,591 1016,631 1021,766 985,805 839,792",
      "99,743 200,729 227,746 247,862 150,915 82,875",
      "200,940 285,894 386,971 333,1084 238,1081 203,1050",
      "880,937 953,884 1072,957 1060,1038 999,1079 871,994",
      "320,1127 486,1059 535,1105 505,1262 387,1274 338,1234 325,1170",
      "532,1171 625,1113 719,1166 708,1286 689,1307 598,1316",
      "890,1094 1076,1102 1131,1157 1138,1331 1049,1413 988,1425 818,1313 806,1231",
      "274,205 290,203 417,643 403,648",
      "604,387 620,387 646,614 630,614",
      "700,58 923,115 919,128 697,72",
      "815,38 1040,73 1038,86 813,52",
      "824,216 1048,171 1052,186 826,230",
      "1091,296 1106,296 1091,526 1076,526",
      "1106,624 1122,624 1122,856 1106,856",
      "438,970 883,1083 880,1097 434,985",
    ],
    dots:
      "250,57 221,139 242,293 728,237 816,376 1131,58 434,625 465,657 593,597 735,636 267,726 297,751 215,912 465,955 887,857 1027,891",
  },
  {
    x: 0,
    y: 1155,
    shapes: [
      "25,243 118,69 155,56 308,79 378,262 332,347 175,402 81,356",
      "545,372 641,271 686,279 734,410 684,463 595,456",
      "774,279 887,281 921,413 851,465 754,437 731,380",
      "957,310 1069,245 1125,271 1157,328 1066,448 972,412",
      "347,452 457,502 439,643 434,650 265,618 256,584",
      "75,562 145,529 262,642 253,686 136,747 47,658",
      "605,561 675,579 699,690 659,733 541,696 534,668",
      "811,562 938,606 915,716 871,741 796,725 759,633",
      "1036,622 1049,606 1163,582 1234,678 1162,783 1091,783",
      "372,827 457,894 435,991 414,1010 256,943 256,933",
      "468,858 537,819 663,937 638,996 497,1022 452,972",
      "811,945 904,888 978,905 999,1072 964,1099 868,1104",
      "432,221 656,182 659,195 433,236",
      "18,564 425,357 431,370 21,575",
      "472,393 488,393 452,851 436,851",
      "709,607 726,607 720,1066 705,1066",
      "20,763 33,760 116,975 103,979",
      "152,840 376,789 378,802 153,853",
      "733,740 941,842 935,854 728,752",
      "910,745 922,738 1198,1100 1188,1109",
      "315,1034 515,1152 507,1163 310,1044",
      "608,1080 1066,1139 1063,1155 608,1096",
      "917,546 1150,538 1150,552 917,560",
    ],
    dots:
      "53,467 181,528 522,461 589,491 549,564 300,729 824,556 911,588 752,664 1030,468 576,834 198,946 244,999 141,1048 765,1050 1048,1051 810,1160 1169,1123",
  },
  {
    x: 1140,
    y: 1155,
    shapes: [
      "180,295 340,236 407,317 368,437 281,463 201,428",
      "472,173 561,165 615,222 528,353 461,330 433,290",
      "645,326 732,213 811,220 883,327 747,448 726,442",
      "431,432 545,362 629,375 724,531 700,616 545,683 500,669 410,558",
      "763,468 853,392 962,376 1098,471 1118,592 1002,745 828,736 739,609",
      "-5,438 68,380 141,388 207,488 101,601 14,567",
      "178,673 260,644 336,758 259,820 156,729",
      "-5,853 28,811 117,770 285,863 293,960 207,1077 114,1093 26,1057",
      "388,784 520,796 550,840 499,978 446,993 332,863",
      "600,902 694,882 755,962 708,1042 641,1049 578,949",
      "802,976 965,1006 974,1037 888,1158 818,1142 767,1067",
      "351,506 364,502 452,713 438,717",
      "467,730 905,868 903,881 465,744",
      "173,1094 400,1140 396,1152 173,1106",
      "482,1093 713,1111 711,1127 482,1108",
      "1066,920 1080,930 948,1112 938,1105",
    ],
    dots:
      "180,257 674,194 872,215 300,603 519,711 278,1011 1034,934 930,981 840,1158",
  },
]

const Voids = () =>
  tiles.map(tile => (
    <g key={`${tile.x}-${tile.y}`} transform={`translate(${tile.x} ${tile.y})`}>
      {tile.shapes.map(points => (
        <polygon key={points} points={points} />
      ))}
      {tile.dots.split(" ").map(dot => {
        const [cx, cy] = dot.split(",")
        return <circle key={dot} cx={cx} cy={cy} r="8" />
      })}
    </g>
  ))

const FishLogo = ({ transform, opacity }) => (
  <g transform={transform} opacity={opacity} fill="none">
    <circle r="107" stroke="#5fe0f0" strokeWidth="8" opacity=".55" />
    <ellipse rx="110" ry="101" stroke="#1e9bff" strokeWidth="5" transform="rotate(-35)" />
    <ellipse rx="105" ry="99" stroke="#39c5f5" strokeWidth="5" transform="rotate(30)" />
    <path d="M-108-40Q-100-95-40-98M-70 20Q-80 85-20 105M88-105Q75-60 104-25" stroke="#6fdcf2" strokeWidth="6" opacity=".7" />
    <path d="M-68-56L-2-50-22-20z" fill="#7fd0ec" />
    <path d="M-68-56l46 36-16 30z" fill="#5b9be0" />
    <path d="M-2-50L22 14-22-20z" fill="#79bdf2" />
    <path d="M-38 10l16-30 44 34z" fill="#4e8cd3" />
    <path d="M22 14l56 16-26 2z" fill="#7fdcf2" />
    <path d="M22 14l30 18-4 32z" fill="#4b92df" />
    <path d="M78 30L52 32l-4 32z" fill="#65aeea" />
    <circle cx="-50" cy="-44" r="6" stroke="#e8f8ff" strokeWidth="3" />
  </g>
)

const Section = () => (
  <Plate viewBox="8 25 2300 2306" role="img" aria-label="Part1-Mortar">
    <mask id="solid" maskUnits="userSpaceOnUse" x="8" y="25" width="2300" height="2306">
      <rect x="8" y="25" width="2300" height="2306" fill="#fff" />
      <Voids />
    </mask>
    <rect x="10" y="27" width="2296" height="2302" fill="#d9d9d9" mask="url(#solid)" />
    <g fill="none" stroke="#141414" strokeWidth="4">
      <Voids />
      <rect x="10" y="27" width="2296" height="2302" />
    </g>
    <FishLogo transform="translate(122 193) scale(.65)" opacity=".55" />
    <g fill="#3f4347" fillOpacity=".7" stroke="#aaa" strokeOpacity=".6">
      <text x="228" y="216" fontFamily="Noto Sans CJK SC, sans-serif" fontWeight="900" fontSize="133" strokeWidth="4">
        渊鱼科技
      </text>
      <text x="232" y="275" fontFamily="DejaVu Sans Mono, monospace" fontSize="54" stroke="none" fill="#888">
        AbyssFish Tech
      </text>
    </g>
    <FishLogo transform="translate(2098 2113)" opacity=".9" />
    <text x="1932" y="2281" fill="#5aa5d2" fontFamily="Liberation Mono, monospace" fontStyle="italic" fontSize="60">
      AbyssFish
    </text>
  </Plate>
)

function Combo({ id, options, spin, off, icon, ...box }) {
  return (
    <SelectBox {...box}>
      {spin && (
        <Spin>
          <button aria-label="上一个"><Arrow off={off !== undefined} /></button>
          <button aria-label="下一个"><Arrow down off={off === "both"} /></button>
        </Spin>
      )}
      {icon}
      <select id={id} aria-label={options[0]} defaultValue={options[0]}>
        {options.map(o => (
          <option key={o}>{o}</option>
        ))}
      </select>
      <Chevron />
    </SelectBox>
  )
}

const Tools = ({ items }) =>
  items.map(([label, icon]) => (
    <ToolButton key={label} aria-label={label}>
      {icon}
    </ToolButton>
  ))

function ModelTree() {
  const [selected, setSelected] = useState("Part1-Mortar")

  return (
    <Tree role="tree">
      {treeRows.map(([level, label, sign, icon], i) => (
        <TreeRow key={label + i} $root={level === 0} role="treeitem" onClick={() => setSelected(label)}>
          {level > 1 && <Cell />}
          {level > 2 && <Cell $line />}
          <Cell $line={level > 1}>
            {sign ? (
              <Expander aria-label={`${label} ${sign}`}>
                <svg width="7" height="7" stroke="#3b5fa8" strokeWidth="1">
                  <path d={sign === "+" ? "M0 3.500h7M3.500 0v7" : "M0 3.500h7"} />
                </svg>
              </Expander>
            ) : (
              <Tick />
            )}
          </Cell>
          {icon && treeIcons[icon]}
          <Label
            $bare={!icon}
            $selected={label === selected}
            $underline={label === "Model-1" || label === "Part1-Mortar"}
          >
            {label}
          </Label>
        </TreeRow>
      ))}
    </Tree>
  )
}

export default function App() {
  const [view, setView] = useState(2)

  return (
    <Window>
      <GlobalStyle />
      <Defs />
      <TitleBar>
        <Glyph size={19} box={20} stroke="#4a4c8c">
          <path d="M7 1h6v4l6 4H1l6-4zM1 11h18l-6 4v4H7v-4z" fill="#5c5fa0" />
        </Glyph>
        <h1>Abaqus/CAE 2023 - 模型数据库: G:\Abaqus\temp23\FiberConcrete.cae [Viewport: 1]</h1>
        <WindowButton aria-label="最小化">
          <Glyph size={14} box={14} stroke="#888"><path d="M1 7h12" /></Glyph>
        </WindowButton>
        <WindowButton aria-label="还原">
          <Glyph size={14} box={14} stroke="#888"><rect x="1" y="4" width="9" height="9" rx="2" /><path d="M4 2q1-1 2-1h5q2 0 2 2v5q0 1-1 2" /></Glyph>
        </WindowButton>
        <WindowButton aria-label="关闭">
          <Glyph size={14} box={14} stroke="#888"><path d="M1 1l12 12M13 1L1 13" /></Glyph>
        </WindowButton>
      </TitleBar>

      <MenuBar>
        <Glyph size={19} box={20} stroke="#3a63b5">
          <path d="M1 1h18v18H1z" fill="#fff" strokeWidth="1.500" />
          <path d="M1 2h18" strokeWidth="3" />
          <path d="M8 6h4l3 5H5zM5 13h10l-3 4H8z" fill="#2b2f86" stroke="none" />
        </Glyph>
        {menus.map(([text, key]) => (
          <button key={text}>
            {text}
            {key && (
              <>
                (<u>{key}</u>)
              </>
            )}
          </button>
        ))}
        <button aria-label="这是什么">
          <Glyph size={18} box={18} stroke="#111">
            <path d="M1 1l8 8H6l2 5-2 1-2-5-3 3z" fill="#111" />
            <path d="M11 4q1-3 4-2 2 2 0 4l-2 2v2M13 12v2" strokeWidth="2" />
          </Glyph>
        </button>
        <ChildButtons>
          <button aria-label="最小化视口"><Glyph size={12} box={12} stroke="#6d7d90"><path d="M2 10h8" strokeWidth="2.500" /></Glyph></button>
          <button aria-label="还原视口"><Glyph size={12} box={12} stroke="#6d7d90"><path d="M1 5h7v6H1zM4 4V1h7v6H9" strokeWidth="1.500" /></Glyph></button>
          <button aria-label="关闭视口"><Glyph size={12} box={12} stroke="#6d7d90"><path d="M2 2l8 8M10 2l-8 8" strokeWidth="2.500" /></Glyph></button>
        </ChildButtons>
      </MenuBar>

      <Toolbar>
        <ToolGroup><Tools items={fileTools} /></ToolGroup>
        <ToolGroup>
          <Tools items={viewTools} />
          {[1, 2, 3, 4].map(n => (
            <ToolButton key={n} $num $active={view === n} onClick={() => setView(n)}>{n}</ToolButton>
          ))}
          <ToolButton aria-label="保存视图"><TriadRotate /></ToolButton>
        </ToolGroup>
        <ToolGroup><Tools items={displayTools} /></ToolGroup>
        <ToolGroup>
          <ToolButton aria-label="视图剖切">
            <Glyph><path d="M3 2h7v15h7v7H3z" fill="#eaa437" stroke="#333" strokeWidth="1.500" /><path d="M17 13h9v9h-9" strokeWidth="1.800" /><path d="M17 0v28" stroke={RED} strokeWidth="2" strokeDasharray="3 2" /></Glyph>
          </ToolButton>
          <ToolButton aria-label="剖切管理器"><TableIcon /></ToolButton>
        </ToolGroup>
        <ToolGroup>
          <ToolButton aria-label="查询">
            <Glyph>
              <circle cx="14" cy="14" r="12.500" fill="#3665b3" stroke="#8ba6d2" strokeWidth="1.500" />
              <text x="10" y="22" fill="#fff" stroke="none" fontFamily="Liberation Serif, serif" fontStyle="italic" fontWeight="700" fontSize="22">i</text>
            </Glyph>
          </ToolButton>
        </ToolGroup>
        <ToolGroup>
          <ToolButton aria-label="颜色代码">
            <Glyph>
              <path d="M2 6q6-6 14-3 12 4 10 15-2 9-12 8-6-1-4-5 0-3-4-3-7-5-4-12z" fill="#f2b872" stroke="#8e6130" />
              <circle cx="8" cy="7" r="3.500" fill="#d91c1c" stroke="none" />
              <circle cx="16" cy="7" r="3" fill="#f2e21b" stroke="none" />
              <circle cx="22" cy="12" r="3" fill="#1b2b86" stroke="none" />
              <circle cx="20" cy="20" r="3" fill="#1a9a45" stroke="none" />
              <circle cx="10" cy="19" r="3" fill="#fff" />
            </Glyph>
          </ToolButton>
          <Combo $width={180} options={["部件默认值"]} />
          <ToolButton aria-label="透明度"><Cube fill="#bfa877" stroke="#8b6a25" back /></ToolButton>
          <ToolButton aria-label="更多颜色" $width={17}><Arrow down /></ToolButton>
        </ToolGroup>
        <ToolGroup>
          <ToolButton aria-label="选择">
            <Glyph><path d="M8 2l13 13-7 1 4 9-3 1-4-9-3 4z" stroke={GRAY} strokeWidth="1.500" /></Glyph>
          </ToolButton>
          <Combo $width={95} $blue options={["全部"]} />
          <ToolButton aria-label="选择范围" $width={32}>
            <Glyph><path d="M4 3h13v14H4z" stroke={GRAY} fill="#fff" strokeWidth="1.500" /><path d="M9 9h12v14H9z" fill={GRAY} stroke="none" /><path d="M15 27h3" stroke={GRAY} strokeWidth="2" /></Glyph>
          </ToolButton>
          <Rule />
          <Tools items={selectTools} />
        </ToolGroup>
        <ToolGroup>
          <ToolButton aria-label="显示网格"><Cube fill="#8497c4" top="#a6b5db" side="#6c7fb0" stroke="#2d3c66" mesh /></ToolButton>
          <ToolButton aria-label="显示种子">
            <Glyph><path d="M2 8l7-6h17v18l-7 7H2z" fill="#a9b8e2" stroke="none" /><path d="M2 8h17v19H2zL9 2h17v18l-7 7M19 8l7-6" stroke="#e0202c" strokeWidth="2.600" strokeDasharray="3 2" /></Glyph>
          </ToolButton>
          <ToolButton aria-label="几何显示" $active>
            <Glyph><path d="M3 10l6-6h17v17l-6 7H3z" fill="#2cb52c" stroke="#1b4d1b" strokeWidth="1.500" /><path d="M3 10h17v18M20 10l6-6" stroke="#1b4d1b" strokeWidth="1.500" /><path d="M8 14l4-5h10v10l-4 4H8z" fill="#d5c872" stroke="#4d4a1b" strokeWidth="1.500" /><path d="M8 14h10v9M18 14l4-5M12 9v10h10" stroke="#4d4a1b" /></Glyph>
          </ToolButton>
        </ToolGroup>
        <ToolGroup>
          <FormatButton>
            <Cube fill="none" stroke="#9b721f" back />
            <span>格式 %s</span>
          </FormatButton>
          <ToolButton aria-label="消隐"><Cube fill="#fff" stroke="#b08228" /></ToolButton>
          <ToolButton aria-label="着色"><Cube fill={YE} top="#fbe9a6" side="#c98f1e" stroke="#8f661a" /></ToolButton>
        </ToolGroup>
      </Toolbar>

      <Body>
        <Side>
          <Tabs role="tablist">
            <Tab role="tab" aria-selected="true" $active>模型</Tab>
            <Tab role="tab" aria-selected="false">结果</Tab>
          </Tabs>
          <SidePanel>
            <SideTools>
              <Combo
                $width={150}
                $height={30}
                $font={16}
                options={["模型数据库"]}
                icon={
                  <Glyph size={24} box={24}>
                    <path d="M3 5v14q0 3 9 3t9-3V5" fill="#f3d23f" />
                    <ellipse cx="12" cy="5" rx="9" ry="3" fill="#fbe678" />
                    <path d="M3 9q0 4 9 3l9-1M3 14q0 4 9 3l9-1M3 18q0 4 9 4l9-2" strokeWidth="2.200" />
                  </Glyph>
                }
              />
              <button aria-label="展开或折叠">
                <Glyph size={22} box={20} stroke="none"><path d="M10 0l6 7H4zM10 20l6-7H4z" fill={GRAY} /></Glyph>
              </button>
              <button aria-label="上一级">
                <Glyph size={20} box={20} stroke={GRAY} strokeWidth="1.500"><path d="M1 4l2-2h5l1 2h10v14H1zM9 15V8M6 10l3-3 3 3M9 14h6" /></Glyph>
              </button>
              <button aria-label="过滤">
                <Glyph size={20} box={20} stroke={GRAY} strokeWidth="1.500"><path d="M1 1h4v4H1zM9 5h4v4H9zM15 14h4v4h-4zM5 3l4 3M12 9l4 5M3 6v6l9 4M3 12l4-2M3 12l3 4" /></Glyph>
              </button>
              <button aria-label="提示">
                <Glyph size={20} box={20}><circle cx="10" cy="9" r="5" fill="#fbe44c" strokeWidth="1.300" /><path d="M8 14h4v5H8z" fill="#9aa" /><path d="M10 0v3M0 9h4M16 9h4M3 2l2 2M17 2l-2 2" stroke="#b2971a" strokeWidth="1.500" /></Glyph>
              </button>
            </SideTools>
            <TreeBox>
              <ModelTree />
              <VScroll />
              <HScroll />
            </TreeBox>
          </SidePanel>
        </Side>

        <Work>
          <ModuleBar>
            <label htmlFor="module">模块:<Combo id="module" $width={128} $sunken spin off="up" options={["部件"]} /></label>
            <label htmlFor="model">模型:<Combo id="model" $width={128} $font={16} $sunken spin off="both" options={["Model-1"]} /></label>
            <label htmlFor="part">部件:<Combo id="part" $width={192} $font={16} $sunken spin options={["Part1-Mortar"]} /></label>
          </ModuleBar>
          <Stage>
            <Toolbox>
              {toolSets.map((set, i) => (
                <ToolSet key={i}>
                  {set.map(([label, icon, hasMore]) => (
                    <ToolSetButton key={label} aria-label={label} $more={hasMore}>
                      {icon}
                    </ToolSetButton>
                  ))}
                </ToolSet>
              ))}
            </Toolbox>
            <Viewport>
              <Section />
              <Triad width="90" height="90" viewBox="0 0 90 90" fill="#fff" fontSize="13" fontWeight="700">
                <path d="M15 73V38" stroke="#12b312" strokeWidth="4" />
                <path d="M15 24l7 18H8z" fill="#17c217" />
                <path d="M15 74h32" stroke="#b01010" strokeWidth="4" />
                <path d="M64 74l-18-7v14z" fill="#b81212" />
                <circle cx="15" cy="74" r="7" fill="#1721b8" />
                <text x="11" y="78" fontSize="11">Z</text>
                <text x="11" y="15">Y</text>
                <text x="72" y="79">X</text>
              </Triad>
              <ViewCompass width="68" height="96" viewBox="0 0 68 96" fill="#dfd610" fontSize="10" fontWeight="700">
                <path d="M19 27q31 4 31 31H19z" fill="#16606f" stroke="#dccbf2" strokeWidth="3" />
                <path d="M19 17v66M2 85h42" stroke="#dccbf2" strokeWidth="3" />
                <path d="M16 14h6v6h-6z" fill="#dccbf2" />
                <path d="M15 81h8v8h-8z" fill="#d10a0a" />
                <text x="16" y="11">Y</text>
                <text x="14" y="61">Z</text>
                <text x="57" y="61">X</text>
              </ViewCompass>
            </Viewport>
          </Stage>
          <Prompt>
            <PromptButton aria-label="上一步" disabled>
              <Glyph size={20} box={20} stroke="none"><path d="M0 10l8-6v4h11v4H8v4z" fill="#999" /></Glyph>
            </PromptButton>
            <PromptButton aria-label="取消">
              <Glyph size={18} box={18} stroke="#e5121b"><path d="M3 2q4 8 12 14M15 2Q7 8 3 16" strokeWidth="2" /></Glyph>
            </PromptButton>
            <Brand>
              <svg width="28" height="28" viewBox="0 0 28 28" fill="none" stroke="#16317d" strokeWidth="2.400">
                <path d="M10 3q8-2 8 1-1 4-9 6M10 11q6 0 4 5-3 7-12 9L8 14M27 11q-9-1-8 3 0 1 3 3 2 5-7 5" />
              </svg>
              SIMULIA
            </Brand>
          </Prompt>
        </Work>
      </Body>
    </Window>
  )
}
